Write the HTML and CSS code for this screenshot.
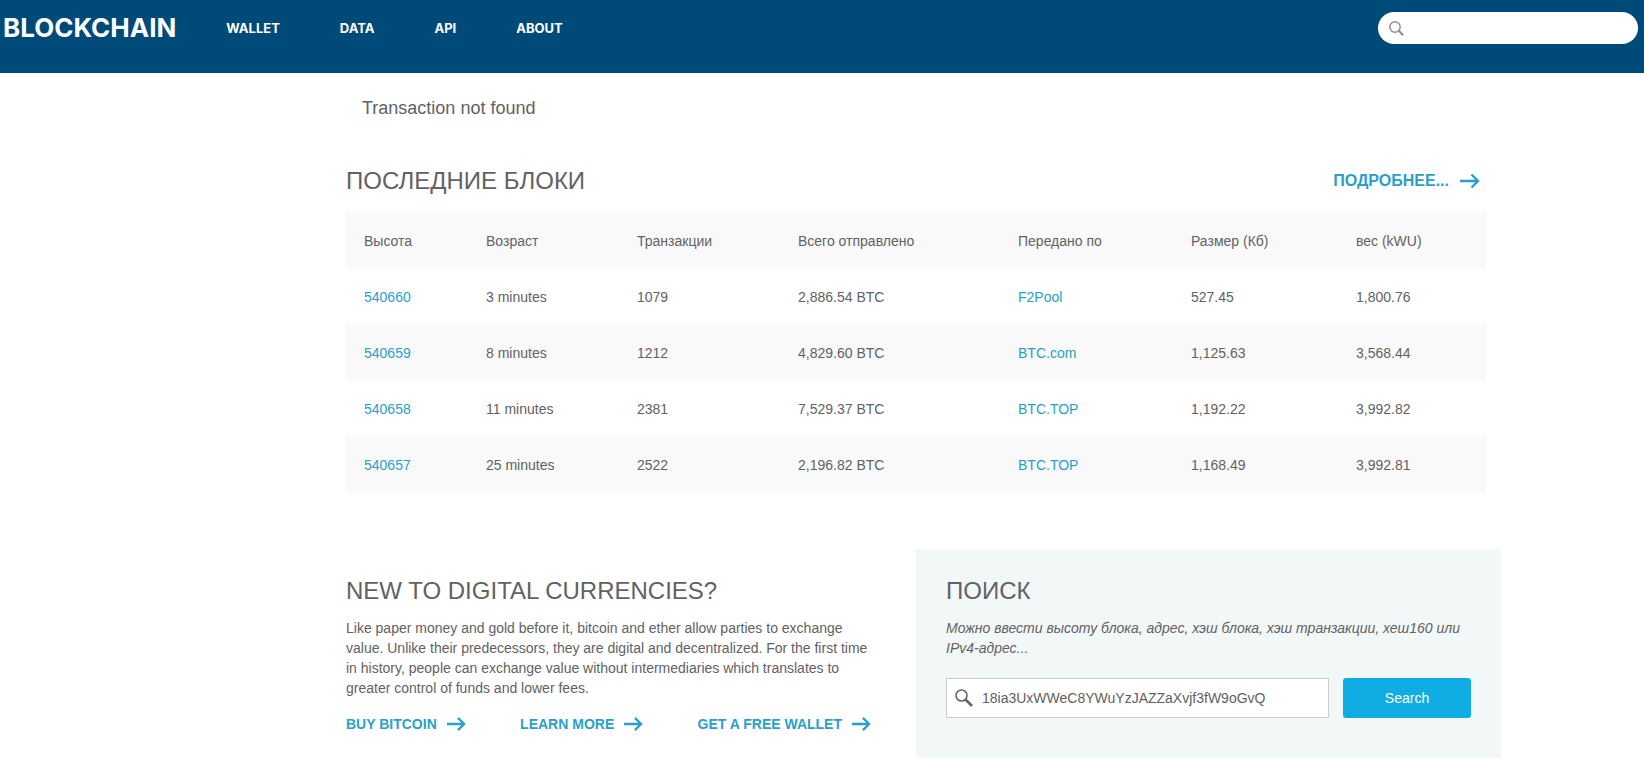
FILE: index.html
```html
<!DOCTYPE html>
<html lang="ru">
<head>
    <meta charset="UTF-8">
    <meta name="viewport" content="width=device-width, initial-scale=1.0">
    <title>Transaction not found - Blockchain</title>
    <link rel="stylesheet" href="styles.css">
</head>
<body>
    <header class="header">
        <a href="#" class="logo">BLOCKCHAIN</a>
        <nav class="nav">
            <a href="#">WALLET</a>
            <a href="#">DATA</a>
            <a href="#">API</a>
            <a href="#">ABOUT</a>
        </nav>
        <form class="top-search">
            <svg class="top-icon" viewBox="0 0 15 15"><circle cx="6" cy="6" r="5.2"/><path d="M9.8 9.8L14 14.2" stroke-width="2"/></svg>
            <input type="text" aria-label="Search">
        </form>
    </header>

    <main class="main">
        <p class="notice">Transaction not found</p>

        <section class="blocks">
            <div class="blocks-head">
                <h2>ПОСЛЕДНИЕ БЛОКИ</h2>
                <a href="#" class="more">ПОДРОБНЕЕ... <svg class="arrow" viewBox="0 0 20 16"><path d="M0 8H18M11.5 1.5L18 8L11.5 14.5"/></svg></a>
            </div>
            <table class="blocks-table">
                <thead>
                    <tr>
                        <th>Высота</th>
                        <th>Возраст</th>
                        <th>Транзакции</th>
                        <th>Всего отправлено</th>
                        <th>Передано по</th>
                        <th>Размер (Кб)</th>
                        <th>вес (kWU)</th>
                    </tr>
                </thead>
                <tbody>
                    <tr>
                        <td><a href="#">540660</a></td>
                        <td>3 minutes</td>
                        <td>1079</td>
                        <td>2,886.54 BTC</td>
                        <td><a href="#">F2Pool</a></td>
                        <td>527.45</td>
                        <td>1,800.76</td>
                    </tr>
                    <tr>
                        <td><a href="#">540659</a></td>
                        <td>8 minutes</td>
                        <td>1212</td>
                        <td>4,829.60 BTC</td>
                        <td><a href="#">BTC.com</a></td>
                        <td>1,125.63</td>
                        <td>3,568.44</td>
                    </tr>
                    <tr>
                        <td><a href="#">540658</a></td>
                        <td>11 minutes</td>
                        <td>2381</td>
                        <td>7,529.37 BTC</td>
                        <td><a href="#">BTC.TOP</a></td>
                        <td>1,192.22</td>
                        <td>3,992.82</td>
                    </tr>
                    <tr>
                        <td><a href="#">540657</a></td>
                        <td>25 minutes</td>
                        <td>2522</td>
                        <td>2,196.82 BTC</td>
                        <td><a href="#">BTC.TOP</a></td>
                        <td>1,168.49</td>
                        <td>3,992.81</td>
                    </tr>
                </tbody>
            </table>
        </section>

        <div class="bottom">
            <section class="intro">
                <h2>NEW TO DIGITAL CURRENCIES?</h2>
                <p>Like paper money and gold before it, bitcoin and ether allow parties to exchange value. Unlike their predecessors, they are digital and decentralized. For the first time in history, people can exchange value without intermediaries which translates to greater control of funds and lower fees.</p>
                <div class="links">
                    <a href="#">BUY BITCOIN <svg class="arrow" viewBox="0 0 20 16"><path d="M0 8H18M11.5 1.5L18 8L11.5 14.5"/></svg></a>
                    <a href="#">LEARN MORE <svg class="arrow" viewBox="0 0 20 16"><path d="M0 8H18M11.5 1.5L18 8L11.5 14.5"/></svg></a>
                    <a href="#">GET A FREE WALLET <svg class="arrow" viewBox="0 0 20 16"><path d="M0 8H18M11.5 1.5L18 8L11.5 14.5"/></svg></a>
                </div>
            </section>

            <section class="search">
                <h2>ПОИСК</h2>
                <p><label for="query">Можно ввести высоту блока, адрес, хэш блока, хэш транзакции, хеш160 или IPv4-адрес...</label></p>
                <form class="search-form">
                    <div class="field">
                        <svg class="field-icon" viewBox="0 0 18 18"><circle cx="6.5" cy="6.5" r="5.5"/><path d="M10.5 10.5L17 17" stroke-width="2.6"/></svg>
                        <input type="text" id="query" value="18ia3UxWWeC8YWuYzJAZZaXvjf3fW9oGvQ">
                    </div>
                    <button type="submit">Search</button>
                </form>
            </section>
        </div>
    </main>
</body>
</html>
```
FILE: styles.css
```css
* {
    box-sizing: border-box;
}
body {
    margin: 0;
    background: #fff;
    color: #626262;
    font-family: "Liberation Sans", Arial, sans-serif;
    font-size: 14px;
    line-height: 20px;
}
a {
    color: #2b9fc9;
    text-decoration: none;
}
h2, p {
    margin: 0;
}
h2 {
    font-size: 24px;
    line-height: 32px;
    font-weight: normal;
}
input, button {
    font-family: inherit;
    font-size: 14px;
}

/* Header */
.header {
    display: flex;
    align-items: flex-start;
    height: 73px;
    padding: 12px 6px 0 3px;
    background: #004a7a;
}
.header a {
    color: #fff;
    font-family: Inter, sans-serif;
    font-weight: bold;
    line-height: 32px;
}
.header .logo {
    font-size: 26px;
}
.nav {
    display: flex;
    flex: 1;
    gap: 60px;
    margin-left: 50px;
    font-size: 13px;
}
.top-search {
    display: flex;
    align-items: center;
    width: 260px;
    height: 32px;
    padding: 0 11px;
    border-radius: 16px;
    background: #fff;
}
.top-search input {
    flex: 1;
    min-width: 0;
    border: none;
    outline: none;
    background: transparent;
}
.top-icon {
    width: 15px;
    height: 15px;
    fill: none;
    stroke: #8c8c8c;
    stroke-width: 1.4;
}

/* Content */
.main {
    margin: 0 143px 0 346px;
}
.notice {
    padding: 25px 16px 0;
    font-size: 18px;
}
.blocks {
    margin: 47px 15px 0 0;
}
.blocks-head {
    display: flex;
    justify-content: space-between;
    align-items: center;
    margin-bottom: 16px;
    padding-right: 5px;
}
.more, .links a {
    display: flex;
    align-items: center;
    gap: 10px;
    font-weight: bold;
}
.more {
    font-size: 16px;
}
.arrow {
    width: 22px;
    height: 16px;
    fill: none;
    stroke: #2b9fc9;
    stroke-width: 2.4;
}
.blocks-table {
    width: 100%;
    table-layout: fixed;
    border-collapse: collapse;
}
.blocks-table th, .blocks-table td {
    height: 56px;
    padding: 0 18px;
    font-weight: normal;
    text-align: left;
}
.blocks-table th:nth-child(1) { width: 122px; }
.blocks-table th:nth-child(2) { width: 151px; }
.blocks-table th:nth-child(3) { width: 161px; }
.blocks-table th:nth-child(4) { width: 220px; }
.blocks-table th:nth-child(5) { width: 173px; }
.blocks-table th:nth-child(6) { width: 165px; }
.blocks-table thead tr, .blocks-table tbody tr:nth-child(even) {
    background: #f9f9f9;
}

/* Bottom row */
.bottom {
    display: grid;
    grid-template-columns: 38fr 39fr;
    margin-top: 56px;
}
.intro {
    padding: 26px 45px 0 0;
}
.intro p, .search p {
    margin-top: 11px;
}
.links {
    display: flex;
    justify-content: space-between;
    margin-top: 16px;
}
.links .arrow {
    width: 19px;
    height: 16px;
}
.search {
    padding: 26px 30px 40px;
    background: #f2f7f8;
}
.search p {
    font-style: italic;
}
.search-form {
    display: flex;
    gap: 14px;
    margin-top: 20px;
}
.field {
    display: flex;
    flex: 1;
    align-items: center;
    gap: 9px;
    height: 40px;
    padding: 0 8px;
    border: 1px solid #ccc;
    background: #fff;
}
.field input {
    flex: 1;
    min-width: 0;
    padding: 0;
    border: none;
    outline: none;
    color: #5f5f5f;
}
.field-icon {
    width: 18px;
    height: 18px;
    fill: none;
    stroke: #666;
    stroke-width: 1.6;
}
.search-form button {
    width: 128px;
    height: 40px;
    border: none;
    border-radius: 3px;
    background: #10ade4;
    color: #fff;
    cursor: pointer;
}
```
